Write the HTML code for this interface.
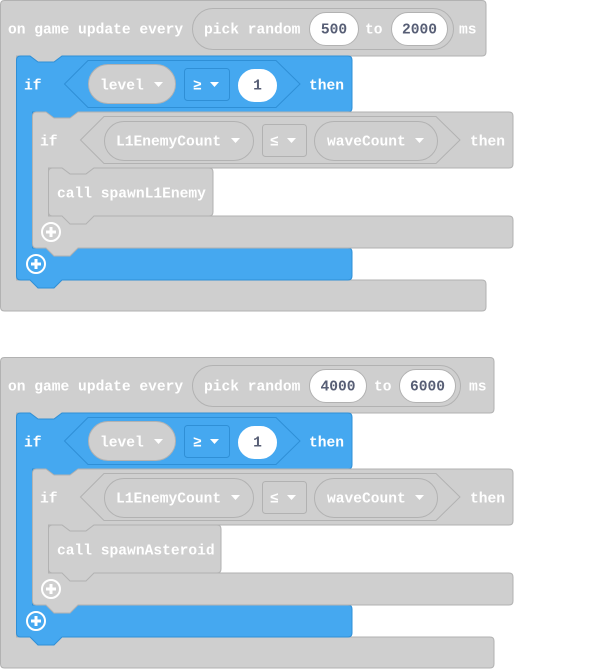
<!DOCTYPE html><html><head><meta charset="utf-8"><style>
html,body{margin:0;padding:0;background:#fff;width:616px;height:669px;overflow:hidden}
text{font-family:"Liberation Mono",monospace;font-weight:bold;font-size:14.6px;fill:#fff;dominant-baseline:central;transform:translateY(1.5px)}
.d{fill:#575e75}
.g{fill:#cfcfcf;stroke:#b2b2b2;stroke-width:1}
.b{fill:#45a8f0;stroke:#2f8fd6;stroke-width:1}
.w{fill:#fff;stroke:#b2b2b2}
</style></head><body>
<svg width="616" height="669" xmlns="http://www.w3.org/2000/svg">
<defs>
<g id="tri"><path d="M0,0 L9,0 L4.5,5 Z" fill="#fff"/></g>
<g id="plus"><circle r="9" fill="none" stroke="#fff" stroke-width="2"/><path d="M-5,0H5M0,-5V5" stroke="#fff" stroke-width="3"/></g>
<g id="blk">
<path class="b" d="M16.5,60 Q16.5,56 20.5,56 H30 L38,62 H54 L62,56 H348 Q352,56 352,60 V108 Q352,112 348,112 H78 L70,118 H54 L46,112 H32.5 V248 H348 Q352,248 352,252 V276 Q352,280 348,280 H62 L54,288 H38 L30,280 H20.5 Q16.5,280 16.5,276 Z"/>
<text x="24" y="85">if</text>
<path class="b" d="M64.5,84 L88,60.5 H276 L300,84 L276,107.5 H88 Z"/>
<rect x="88.5" y="64.5" width="87" height="39" rx="19.5" class="g"/>
<text x="100" y="85">level</text><use href="#tri" x="154" y="82"/>
<rect x="184.5" y="68.5" width="45" height="32" rx="3" class="b"/>
<text x="193" y="85">≥</text><use href="#tri" x="210" y="82"/>
<rect x="238.5" y="69.5" width="38" height="32" rx="16" fill="#fff" stroke="#fff"/>
<text x="257.5" y="85" class="d" text-anchor="middle">1</text>
<text x="309" y="85">then</text>
<path class="g" d="M32.5,116 Q32.5,112 36.5,112 H46 L54,118 H70 L78,112 H509 Q513,112 513,116 V164 Q513,168 509,168 H94 L86,174 H70 L62,168 H48.5 V216 H509 Q513,216 513,220 V244 Q513,248 509,248 H78 L70,256 H54 L46,248 H36.5 Q32.5,248 32.5,244 Z"/>
<text x="40" y="141">if</text>
<path class="g" d="M80.5,140 L104,116.5 H436 L460,140 L436,163.5 H104 Z"/>
<rect x="104.5" y="121.5" width="149" height="39" rx="19.5" class="g"/>
<text x="116" y="141">L1EnemyCount</text><use href="#tri" x="231" y="138"/>
<rect x="262.5" y="124.5" width="44" height="32" rx="3" class="g"/>
<text x="270" y="141">≤</text><use href="#tri" x="287" y="138"/>
<rect x="314.5" y="121.5" width="123" height="39" rx="19.5" class="g"/>
<text x="327" y="141">waveCount</text><use href="#tri" x="415" y="138"/>
<text x="470" y="141">then</text>
<use href="#plus" x="51" y="232"/>
<use href="#plus" x="36" y="264"/>
</g>
</defs>

<g>
<path class="g" d="M0.5,4.5 Q0.5,0.5 4.5,0.5 H482 Q486,0.5 486,4.5 V52 Q486,56 482,56 H62 L54,62 H38 L30,56 H16.5 V280 H482 Q486,280 486,284 V307 Q486,311 482,311 H4.5 Q0.5,311 0.5,307 Z"/>
<text x="8" y="29">on game update every</text>
<rect x="192.5" y="8.5" width="261" height="41" rx="20.5" class="g"/>
<text x="204" y="29">pick random</text>
<rect x="309.5" y="12.5" width="49" height="33" rx="16.5" class="w"/>
<text x="334" y="29" class="d" text-anchor="middle">500</text>
<text x="365" y="29">to</text>
<rect x="391.5" y="12.5" width="56" height="33" rx="16.5" class="w"/>
<text x="419.5" y="29" class="d" text-anchor="middle">2000</text>
<text x="459" y="29">ms</text>
<use href="#blk"/>
<path class="g" d="M48.5,172 Q48.5,168 52.5,168 H62 L70,174 H86 L94,168 H209 Q213,168 213,172 V212 Q213,216 209,216 H94 L86,224 H70 L62,216 H52.5 Q48.5,216 48.5,212 Z"/>
<text x="57" y="193">call spawnL1Enemy</text>
</g>

<g transform="translate(0,357)">
<path class="g" d="M0.5,4.5 Q0.5,0.5 4.5,0.5 H490 Q494,0.5 494,4.5 V52 Q494,56 490,56 H62 L54,62 H38 L30,56 H16.5 V280 H490 Q494,280 494,284 V307 Q494,311 490,311 H4.5 Q0.5,311 0.5,307 Z"/>
<text x="8" y="29">on game update every</text>
<rect x="192.5" y="8.5" width="268" height="41" rx="20.5" class="g"/>
<text x="204" y="29">pick random</text>
<rect x="309.5" y="12.5" width="57" height="33" rx="16.5" class="w"/>
<text x="338" y="29" class="d" text-anchor="middle">4000</text>
<text x="374" y="29">to</text>
<rect x="399.5" y="12.5" width="56" height="33" rx="16.5" class="w"/>
<text x="427.5" y="29" class="d" text-anchor="middle">6000</text>
<text x="469" y="29">ms</text>
<use href="#blk"/>
<path class="g" d="M48.5,172 Q48.5,168 52.5,168 H62 L70,174 H86 L94,168 H217 Q221,168 221,172 V212 Q221,216 217,216 H94 L86,224 H70 L62,216 H52.5 Q48.5,216 48.5,212 Z"/>
<text x="57" y="193">call spawnAsteroid</text>
</g>
</svg>
</body></html>
